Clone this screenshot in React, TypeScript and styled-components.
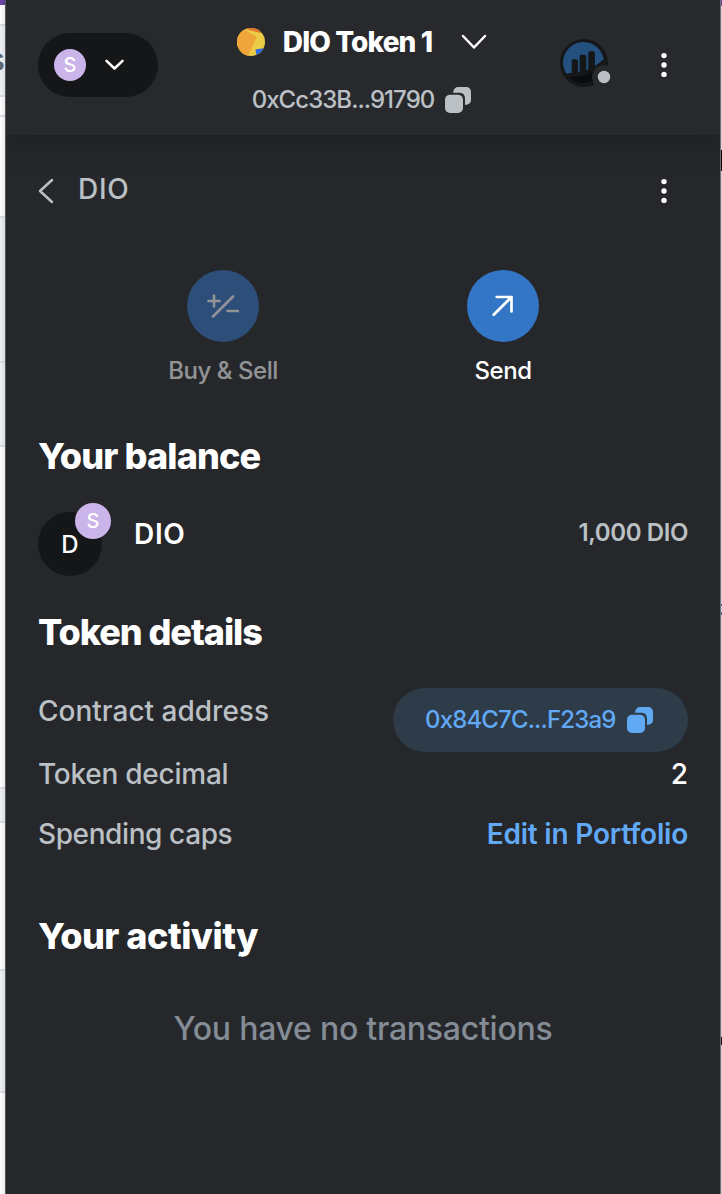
import React from 'react';
import styled, { createGlobalStyle } from 'styled-components';

const c = {
  bg: '#25272b',
  deep: '#141618',
  text: '#ffffff',
  alt: '#bbc0c5',
  link: '#62a9f5',
  lilac: '#cbb4ea',
  blue: '#3376c6',
};

const GlobalStyle = createGlobalStyle`
  *, *::before, *::after { box-sizing: border-box; }
  body {
    margin: 0;
    background: #fff;
    color: ${c.text};
    font-family: Inter, "Liberation Sans", sans-serif;
    font-variant-ligatures: none;
    white-space: nowrap;
  }
  button { font: inherit; color: inherit; border: 0; padding: 0; background: none; }
  h1, h2, p { margin: 0; }
  svg { display: block; flex: none; }
`;

const Page = styled.div`
  display: grid;
  grid-template-columns: 5px 716px 1px;
  height: 1194px;
  overflow: hidden;
`;

/* Slivers of the web page behind the extension window */
const Sliver = styled.div`
  display: flex;
  flex-direction: column;
  overflow: hidden;
`;

const Band = styled.div<{ $h: number; $fill: string }>`
  flex: none;
  height: ${p => p.$h}px;
  background: linear-gradient(90deg, rgba(0, 0, 0, 0), rgba(0, 0, 0, 0.08)), ${p => p.$fill};
`;

const ClippedLetter = styled(Band)`
  display: flex;
  justify-content: flex-end;
  align-items: center;
  font-size: 32px;
  line-height: 1;
  font-weight: 500;
  color: #5b6670;
  padding-bottom: 2px;
`;

const Panel = styled.main`
  display: flex;
  flex-direction: column;
  background: ${c.bg};
  border-left: 1px solid #55585d;
  border-right: 1px solid #756e76;
`;

const Header = styled.header`
  display: grid;
  grid-template-columns: 126px 1fr 128px;
  flex: none;
  height: 135px;
  padding: 0 32px;
  background: #27292d;
  box-shadow: 0 2px 32px rgba(0, 0, 0, 0.3);
  clip-path: inset(0 0 -50px 0);
`;

const NetworkPicker = styled.button`
  display: flex;
  align-items: center;
  gap: 19px;
  width: 120px;
  height: 64px;
  margin-top: 33px;
  padding-left: 16px;
  border-radius: 32px;
  background: ${c.deep};
`;

const NetworkBadge = styled.span<{ $size: number; $font: number }>`
  display: flex;
  align-items: center;
  justify-content: center;
  width: ${p => p.$size}px;
  height: ${p => p.$size}px;
  border-radius: 50%;
  background: ${c.lilac};
  font-size: ${p => p.$font}px;
  line-height: 1;
  font-weight: 500;
`;

const Account = styled.div`
  display: flex;
  flex-direction: column;
  align-items: center;
  gap: 18px;
  padding-top: 22px;
`;

const AccountPicker = styled.button`
  display: flex;
  align-items: center;
  height: 40px;
`;

const AccountName = styled.span`
  margin: 0 29px 0 18px;
  font-size: 28px;
  line-height: 40px;
  font-weight: 800;
  letter-spacing: -0.9px;
`;

const AddressCopy = styled.button`
  display: flex;
  align-items: center;
  gap: 11px;
  height: 39px;
  margin-right: 1px;
  color: ${c.alt};
  font-size: 24px;
  font-weight: 450;
  letter-spacing: -0.95px;
`;

const HeaderTools = styled.div`
  display: flex;
  justify-content: space-between;
  padding-top: 39px;
`;

const KebabButton = styled.button`
  display: flex;
  align-items: center;
  justify-content: center;
  width: 48px;
  height: 52px;
`;

const NavBar = styled.nav`
  display: flex;
  align-items: center;
  flex: none;
  height: 52px;
  margin-top: 30px;
  padding: 0 32px;
  color: ${c.alt};

  ${KebabButton} { margin-left: auto; color: ${c.text}; }
`;

const NavTitle = styled.h1`
  margin: -4px 0 0 24px;
  font-size: 28px;
  line-height: 40px;
  font-weight: 500;
  letter-spacing: 0.7px;
`;

const Actions = styled.div`
  display: grid;
  grid-template-columns: 280px 280px;
  justify-content: center;
  padding-top: 53px;
`;

const Action = styled.button<{ $muted?: boolean }>`
  display: flex;
  flex-direction: column;
  align-items: center;
  gap: 13px;
  font-size: 24px;
  line-height: 32px;
  font-weight: 450;
  letter-spacing: -0.45px;
  opacity: ${p => (p.$muted ? 0.5 : 1)};
`;

const ActionIcon = styled.span`
  display: flex;
  align-items: center;
  justify-content: center;
  width: 72px;
  height: 72px;
  border-radius: 50%;
  background: ${c.blue};
`;

const SectionTitle = styled.h2<{ $top: number; $track: number }>`
  margin-top: ${p => p.$top}px;
  padding: 0 32px;
  font-size: 36px;
  line-height: 48px;
  font-weight: 800;
  letter-spacing: ${p => p.$track}px;
`;

const BalanceRow = styled.div`
  display: flex;
  height: 73px;
  margin-top: 23px;
  padding: 0 32px;
`;

const TokenAvatar = styled.div`
  position: relative;
  display: flex;
  align-items: center;
  justify-content: center;
  width: 64px;
  height: 64px;
  margin-top: 9px;
  border-radius: 50%;
  background: ${c.deep};
  font-size: 24px;
  font-weight: 500;

  ${NetworkBadge} { position: absolute; top: -9px; left: 37px; }
`;

const TokenName = styled.span`
  margin: 11px 0 0 32px;
  font-size: 28px;
  line-height: 40px;
  font-weight: 600;
  letter-spacing: 0.7px;
`;

const TokenAmount = styled.span`
  margin: 10px 0 0 auto;
  color: ${c.alt};
  font-size: 24px;
  line-height: 40px;
  font-weight: 600;
  letter-spacing: -0.4px;
`;

const Details = styled.dl`
  display: grid;
  grid-template-rows: 64px 43px 77px;
  margin: 32px 0 0;
  padding: 0 32px;
`;

const Detail = styled.div`
  display: flex;
  justify-content: space-between;
  align-items: center;
`;

const Term = styled.dt<{ $track: number; $lift?: number }>`
  padding-bottom: ${p => p.$lift ?? 0}px;
  color: ${c.alt};
  font-size: 28px;
  line-height: 38px;
  font-weight: 500;
  letter-spacing: ${p => p.$track}px;
`;

const Value = styled.dd`
  margin: 0;
  font-size: 28px;
  line-height: 38px;
  font-weight: 500;
`;

const AddressPill = styled.button`
  display: flex;
  align-items: center;
  justify-content: space-between;
  width: 295px;
  height: 64px;
  padding: 0 35px 0 32px;
  border-radius: 32px;
  background: #2e3b49;
  color: ${c.link};
  font-size: 24px;
  font-weight: 450;
  line-height: 32px;
  letter-spacing: -0.85px;
`;

const PortfolioLink = styled.a`
  color: ${c.link};
  font-weight: 600;
  letter-spacing: -0.2px;
`;

const EmptyNote = styled.p`
  margin-top: 49px;
  text-align: center;
  color: #848c96;
  font-size: 32px;
  line-height: 40px;
  font-weight: 450;
  letter-spacing: -0.25px;
`;

const Chevron = ({ w, h, d }: { w: number; h: number; d: string }) => (
  <svg width={w} height={h} viewBox={`0 0 ${w} ${h}`} fill="none" stroke="currentColor" strokeWidth="2.5" strokeLinecap="round" strokeLinejoin="round">
    <path d={d} />
  </svg>
);

const CopyIcon = () => (
  <svg width="26" height="26" viewBox="0 0 26 26" fill="currentColor">
    <rect x="0" y="7.7" width="18" height="18.3" rx="5" />
    <path d="M8 5.7C8.4 2 10.3 0 13.5 0H20.5C24.3 0 26 1.9 26 5.5V12.5C26 16 24 17.7 20 18V12C20 7.7 18 5.7 14 5.7Z" />
  </svg>
);

const Kebab = () => (
  <svg width="6" height="26" viewBox="0 0 6 26" fill="currentColor">
    <circle cx="3" cy="3.6" r="2.7" />
    <circle cx="3" cy="13" r="2.7" />
    <circle cx="3" cy="22.4" r="2.7" />
  </svg>
);

const Identicon = () => (
  <svg width="28" height="28" viewBox="0 0 28 28">
    <clipPath id="disc"><circle cx="14" cy="14" r="14" /></clipPath>
    <g clipPath="url(#disc)">
      <path fill="#eccb45" d="M0 0H28V28H0Z" />
      <path fill="#e8742c" d="M9 0H24V5L10 1.5Z" />
      <path fill="#f0a53a" d="M0 5L8 2L20 9L11 28H0Z" />
      <path fill="#2f6ae6" d="M18.5 21.5L28 20V28H19.5Z" />
    </g>
  </svg>
);

const SiteAvatar = () => (
  <svg width="52" height="52" viewBox="0 0 52 52">
    <clipPath id="site"><circle cx="23.5" cy="23.5" r="20.5" /></clipPath>
    <circle cx="24" cy="24" r="24" fill={c.deep} />
    <g clipPath="url(#site)">
      <path fill="#23507f" d="M0 0H48V18L42 21.5C36 27 30 30.5 20 33L7 34.5L0 34Z" />
      <path fill="#090b0c" d="M10 38C24 38 33 34 42 27V46H10Z" />
      <path fill={c.deep} d="M11.7 22q0-1.8 1.8-1.8H16q2 0 2 1.8V34h-6.3ZM19.7 17.5q0-1.8 1.8-1.8h3q1.8 0 1.8 1.8V33h-6.6ZM28.3 14q0-1.8 1.8-1.8h3q1.8 0 1.8 1.8V30h-6.6Z" />
    </g>
    <circle cx="44" cy="38" r="12" fill="#27292d" />
    <circle cx="44" cy="38" r="6.2" fill={c.alt} />
  </svg>
);

const PlusMinusIcon = () => (
  <svg width="32" height="24" viewBox="0 0 32 24" fill="none" stroke="currentColor" strokeWidth="2.6" strokeLinecap="round">
    <path d="M1.5 7H12.5M7 1.5V12.5M6 22.5L26 2.5M20.5 17H31" />
  </svg>
);

const SendIcon = () => (
  <svg width="22" height="22" viewBox="0 0 22 22" fill="none" stroke="currentColor" strokeWidth="2.7" strokeLinecap="round" strokeLinejoin="round">
    <path d="M1.7 19.8L19.5 2M4.7 2H19.5V16.5" />
  </svg>
);

const line = '#dddfe4';
const tint = '#eff1f4';
const leftBands: [number, string][] = [
  [5, '#6a45a5'], [19, '#fff'], [2, line], [69, tint], [2, line], [18, '#fff'], [2, line], [99, '#fff'],
  [2, line], [143, '#eceff3'], [2, line], [82, '#eff2f5'], [2, line], [340, '#fff'], [2, line], [32, tint],
  [2, line], [146, '#fff'], [2, line], [120, '#eff1f5'], [2, line], [101, '#fff'],
];
const rightBands: [number, string][] = [
  [6, '#6a45a5'], [144, '#dad7dc'], [21, '#000'], [433, '#dad7dc'], [2, '#4a6d99'], [6, '#dad7dc'],
  [3, '#4a6d99'], [422, '#dad7dc'], [8, '#111'], [149, '#dad7dc'],
];

export default function App() {
  return (
    <Page>
      <GlobalStyle />
      <Sliver>
        {leftBands.map(([h, fill], i) =>
          i === 3
            ? <ClippedLetter key={i} $h={h} $fill={fill}>s</ClippedLetter>
            : <Band key={i} $h={h} $fill={fill} />
        )}
      </Sliver>
      <Panel>
        <Header>
          <NetworkPicker>
            <NetworkBadge $size={32} $font={20}>S</NetworkBadge>
            <Chevron w={19} h={12} d="M1.5 1.8L9.5 9.5L17.5 1.8" />
          </NetworkPicker>
          <Account>
            <AccountPicker>
              <Identicon />
              <AccountName>DIO Token 1</AccountName>
              <Chevron w={26} h={16} d="M2 2L13 13.5L24 2" />
            </AccountPicker>
            <AddressCopy>0xCc33B...91790<CopyIcon /></AddressCopy>
          </Account>
          <HeaderTools>
            <SiteAvatar />
            <KebabButton><Kebab /></KebabButton>
          </HeaderTools>
        </Header>
        <NavBar>
          <Chevron w={16} h={26} d="M14 2L2 13L14 24" />
          <NavTitle>DIO</NavTitle>
          <KebabButton><Kebab /></KebabButton>
        </NavBar>
        <Actions>
          <Action $muted><ActionIcon><PlusMinusIcon /></ActionIcon>Buy &amp; Sell</Action>
          <Action><ActionIcon><SendIcon /></ActionIcon>Send</Action>
        </Actions>
        <SectionTitle $top={45} $track={-0.85}>Your balance</SectionTitle>
        <BalanceRow>
          <TokenAvatar>D<NetworkBadge $size={36} $font={20}>S</NetworkBadge></TokenAvatar>
          <TokenName>DIO</TokenName>
          <TokenAmount>1,000 DIO</TokenAmount>
        </BalanceRow>
        <SectionTitle $top={32} $track={-1.05}>Token details</SectionTitle>
        <Details>
          <Detail>
            <Term $track={0} $lift={19}>Contract address</Term>
            <Value><AddressPill>0x84C7C...F23a9<CopyIcon /></AddressPill></Value>
          </Detail>
          <Detail>
            <Term $track={-0.25}>Token decimal</Term>
            <Value>2</Value>
          </Detail>
          <Detail>
            <Term $track={-0.4}>Spending caps</Term>
            <Value><PortfolioLink>Edit in Portfolio</PortfolioLink></Value>
          </Detail>
        </Details>
        <SectionTitle $top={40} $track={-0.5}>Your activity</SectionTitle>
        <EmptyNote>You have no transactions</EmptyNote>
      </Panel>
      <Sliver>
        {rightBands.map(([h, fill], i) => <Band key={i} $h={h} $fill={fill} />)}
      </Sliver>
    </Page>
  );
}
